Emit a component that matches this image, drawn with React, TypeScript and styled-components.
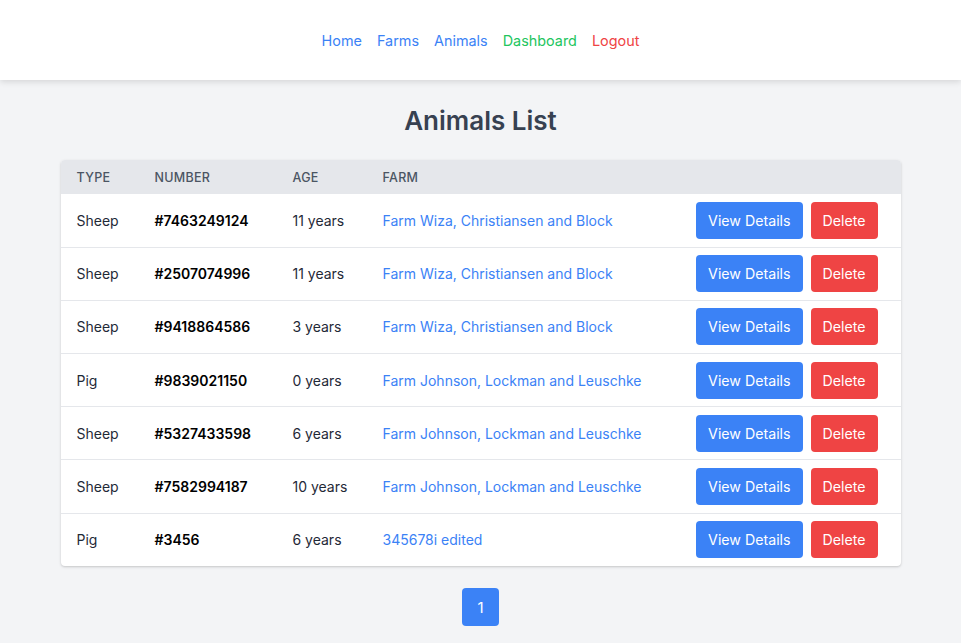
import React from "react";
import styled, { createGlobalStyle } from "styled-components";

const Global = createGlobalStyle`
  html, body { margin: 0; padding: 0; background: #f3f4f6; }
  body { font-family: Inter, "Noto Sans", sans-serif; color: #111827; }
  * { box-sizing: border-box; }
`;

const Nav = styled.nav`
  height: 80px;
  background: #fff;
  box-shadow: 0 2px 6px rgba(0,0,0,0.12);
  display: flex;
  align-items: center;
  justify-content: center;
  gap: 15px;
`;

const NavLink = styled.a<{ $color: string }>`
  color: ${p => p.$color};
  font-size: 14.4px;
  text-decoration: none;
`;

const Main = styled.main`
  display: flex;
  flex-direction: column;
  align-items: center;
  padding-top: 24px;
`;

const Title = styled.h1`
  margin: 0 0 22px;
  font-size: 26px;
  font-weight: 600;
  color: #374151;
  line-height: 34px;
`;

const Card = styled.div`
  width: 840px;
  background: #fff;
  border-radius: 4px;
  box-shadow: 0 1px 3px rgba(0,0,0,0.14), 0 1px 2px rgba(0,0,0,0.06);
  overflow: hidden;
`;

const Table = styled.table`
  width: 100%;
  border-collapse: collapse;
  table-layout: fixed;
`;

const Th = styled.th<{ $w?: number }>`
  ${p => (p.$w ? `width: ${p.$w}px;` : "")}
  height: 34px;
  padding: 0 16px;
  text-align: left;
  background: #e5e7eb;
  color: #4b5563;
  font-size: 12.5px;
  font-weight: 500;
  letter-spacing: 0.3px;
  text-transform: uppercase;
`;

const Tr = styled.tr`
  border-bottom: 1px solid #e5e7eb;
  &:last-child { border-bottom: none; }
`;

const Td = styled.td<{ $bold?: boolean }>`
  height: 53.2px;
  padding: 0 16px;
  font-size: 14px;
  color: ${p => (p.$bold ? "#000" : "#1f2937")};
  font-weight: ${p => (p.$bold ? 600 : 400)};
  white-space: nowrap;
`;

const FarmLink = styled.a`
  color: #3b82f6;
  text-decoration: none;
`;

const Actions = styled.div`
  display: flex;
  justify-content: flex-end;
  gap: 8px;
  padding-right: 7px;
`;

const Btn = styled.button<{ $bg: string }>`
  background: ${p => p.$bg};
  color: #fff;
  border: none;
  border-radius: 4px;
  height: 37px;
  padding: 0 12px;
  font-family: inherit;
  font-size: 14.2px;
  cursor: pointer;
`;

const Pager = styled.div`
  margin-top: 22px;
`;

const PageBtn = styled.button`
  width: 37px;
  height: 38px;
  border: none;
  border-radius: 4px;
  background: #3b82f6;
  color: #fff;
  font-family: inherit;
  font-size: 15px;
`;

const rows = [
  ["Sheep", "#7463249124", "11 years", "Farm Wiza, Christiansen and Block"],
  ["Sheep", "#2507074996", "11 years", "Farm Wiza, Christiansen and Block"],
  ["Sheep", "#9418864586", "3 years", "Farm Wiza, Christiansen and Block"],
  ["Pig", "#9839021150", "0 years", "Farm Johnson, Lockman and Leuschke"],
  ["Sheep", "#5327433598", "6 years", "Farm Johnson, Lockman and Leuschke"],
  ["Sheep", "#7582994187", "10 years", "Farm Johnson, Lockman and Leuschke"],
  ["Pig", "#3456", "6 years", "345678i edited"],
];

export default function App() {
  return (
    <>
      <Global />
      <Nav>
        <NavLink $color="#3b82f6">Home</NavLink>
        <NavLink $color="#3b82f6">Farms</NavLink>
        <NavLink $color="#3b82f6">Animals</NavLink>
        <NavLink $color="#22c55e">Dashboard</NavLink>
        <NavLink $color="#ef4444">Logout</NavLink>
      </Nav>
      <Main>
        <Title>Animals List</Title>
        <Card>
          <Table>
            <thead>
              <tr>
                <Th $w={78}>Type</Th>
                <Th $w={138}>Number</Th>
                <Th $w={90}>Age</Th>
                <Th>Farm</Th>
                <Th $w={220}></Th>
              </tr>
            </thead>
            <tbody>
              {rows.map((r, i) => (
                <Tr key={i}>
                  <Td>{r[0]}</Td>
                  <Td $bold>{r[1]}</Td>
                  <Td>{r[2]}</Td>
                  <Td><FarmLink>{r[3]}</FarmLink></Td>
                  <Td>
                    <Actions>
                      <Btn $bg="#3b82f6">View Details</Btn>
                      <Btn $bg="#ef4444">Delete</Btn>
                    </Actions>
                  </Td>
                </Tr>
              ))}
            </tbody>
          </Table>
        </Card>
        <Pager>
          <PageBtn>1</PageBtn>
        </Pager>
      </Main>
    </>
  );
}
